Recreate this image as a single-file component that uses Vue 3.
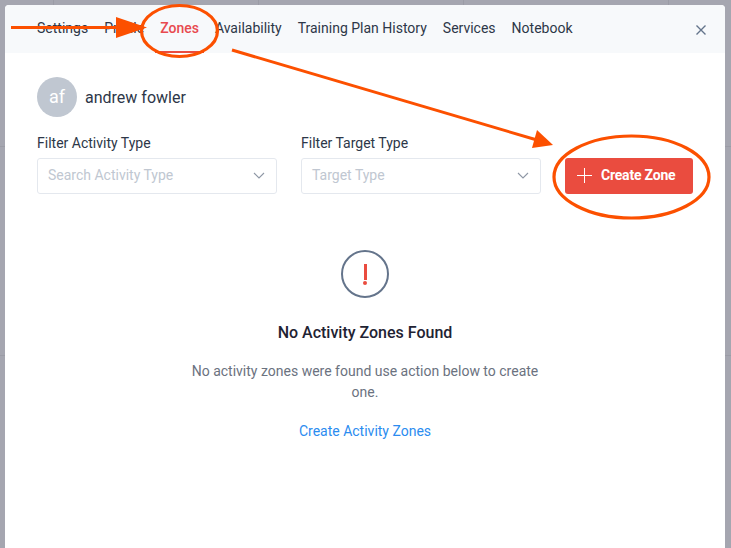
<template>
  <div class="page">
    <div class="backdrop-lines">
      <i v-for="x in [53, 258, 463, 668]" :key="x" class="vline" :style="{ left: x + 'px' }"></i>
      <i v-for="y in [146, 355]" :key="y" class="hline" :style="{ top: y + 'px' }"></i>
    </div>

    <div class="modal">
      <header class="tabs">
        <a v-for="tab in tabs" :key="tab" class="tab" :class="{ active: tab === 'Zones' }">{{ tab }}</a>
        <svg class="close" viewBox="0 0 12 12" width="12" height="12">
          <path d="M1.5 1.5l9 9M10.5 1.5l-9 9" stroke="#64748b" stroke-width="1.4" fill="none" />
        </svg>
      </header>

      <div class="body">
        <div class="user">
          <div class="avatar">af</div>
          <span class="name">andrew fowler</span>
        </div>

        <div class="filters">
          <div class="field">
            <label>Filter Activity Type</label>
            <div class="select">
              <span>Search Activity Type</span>
              <svg viewBox="0 0 12 7" width="12" height="7"><path d="M1 1l5 5 5-5" stroke="#8f98a6" stroke-width="1.1" fill="none" /></svg>
            </div>
          </div>
          <div class="field">
            <label>Filter Target Type</label>
            <div class="select">
              <span>Target Type</span>
              <svg viewBox="0 0 12 7" width="12" height="7"><path d="M1 1l5 5 5-5" stroke="#8f98a6" stroke-width="1.1" fill="none" /></svg>
            </div>
          </div>
          <button class="create">
            <svg viewBox="0 0 15 15" width="15" height="15"><path d="M7.5 0v15M0 7.5h15" stroke="#fff" stroke-width="1" fill="none" /></svg>
            Create Zone
          </button>
        </div>

        <div class="empty">
          <div class="alert"><span class="bar"></span><span class="dot"></span></div>
          <h3>No Activity Zones Found</h3>
          <p>No activity zones were found use action below to create one.</p>
          <a class="link">Create Activity Zones</a>
        </div>
      </div>
    </div>

    <!-- hand drawn annotations on top of the screenshot -->
    <svg class="marks" viewBox="0 0 731 548" width="731" height="548">
      <g fill="none" stroke="#fc5000">
        <path d="M11 27.5L120 27.5" stroke-width="3" />
        <path d="M232 50L537 140" stroke-width="3" />
        <ellipse cx="179.5" cy="31" rx="38" ry="25.5" stroke-width="3.2" />
        <ellipse cx="631.5" cy="177" rx="77.5" ry="41" stroke-width="3.2" />
      </g>
      <path d="M116 17L116 38L147 27.5Z" fill="#fc5000" />
      <path d="M537 130L532 148L553 145Z" fill="#fc5000" />
    </svg>
  </div>
</template>

<script setup>
const tabs = ['Settings', 'Profile', 'Zones', 'Availability', 'Training Plan History', 'Services', 'Notebook'];
</script>

<style>
html, body {
  margin: 0;
  background: #a5a6b0;
}
</style>

<style scoped>
.page {
  position: relative;
  width: 731px;
  height: 548px;
  overflow: hidden;
  background: #a5a6b0;
  padding: 5px 6px 0 5px;
  box-sizing: border-box;
  font-family: Roboto, sans-serif;
  font-size: 14px;
  color: #2d3748;
}

.backdrop-lines i {
  position: absolute;
  background: #9b9ca6;
}

.vline {
  top: 0;
  bottom: 0;
  width: 1px;
}

.hline {
  left: 0;
  right: 0;
  height: 1px;
}

.modal {
  position: relative;
  height: 100%;
  background: #fff;
  border-radius: 4px 4px 0 0;
  overflow: hidden;
}

.tabs {
  display: flex;
  align-items: center;
  height: 48px;
  padding: 0 18px 0 24px;
  background: #f7f9fb;
}

.tab {
  position: relative;
  padding: 0 8px;
  line-height: 44px;
  margin-bottom: 2px;
  white-space: nowrap;
}

.tab.active {
  color: #e84a4f;
  font-weight: 500;
}

.tab.active::after {
  content: '';
  position: absolute;
  left: 3px;
  right: 3px;
  bottom: -3px;
  height: 2px;
  background: #ea4c3f;
}

.close {
  margin-left: auto;
  margin-top: 2px;
}

.body {
  padding: 24px 32px 0;
}

.user {
  display: flex;
  align-items: center;
  gap: 8px;
}

.avatar {
  width: 40px;
  height: 40px;
  border-radius: 50%;
  background: #c0c7d1;
  color: #fff;
  font-size: 18px;
  line-height: 40px;
  text-align: center;
}

.name {
  font-size: 16px;
}

.filters {
  display: flex;
  align-items: flex-end;
  gap: 24px;
  margin-top: 16px;
}

.field {
  width: 240px;
}

label {
  display: block;
  line-height: 20px;
  margin-bottom: 5px;
}

.select {
  display: flex;
  align-items: center;
  justify-content: space-between;
  box-sizing: border-box;
  height: 36px;
  padding: 0 11px 2px 10px;
  border: 1px solid #e4e8ee;
  border-radius: 3px;
  background: #fff;
  color: #c0c7d1;
}

.create {
  display: flex;
  align-items: center;
  gap: 9px;
  width: 128px;
  height: 36px;
  padding: 0 12px 2px;
  border: 0;
  border-radius: 3px;
  background: #ea4c3f;
  color: #fff;
  font-family: inherit;
  font-size: 14px;
  font-weight: 700;
  letter-spacing: -0.2px;
  white-space: nowrap;
}

.empty {
  display: flex;
  flex-direction: column;
  align-items: center;
  margin-top: 56px;
  text-align: center;
}

.alert {
  display: flex;
  flex-direction: column;
  align-items: center;
  justify-content: center;
  gap: 1px;
  width: 44px;
  height: 44px;
  border: 2px solid #64748b;
  border-radius: 50%;
}

.alert .bar {
  width: 3px;
  height: 16px;
  background: #ea4c3f;
}

.alert .dot {
  width: 4px;
  height: 4px;
  border-radius: 50%;
  background: #ea4c3f;
}

h3 {
  margin: 23px 0 0;
  font-size: 16px;
  font-weight: 500;
  line-height: 24px;
  color: #1f2333;
}

p {
  width: 360px;
  margin: 16px 0 0;
  line-height: 21px;
  color: #6b7280;
}

.link {
  margin-top: 18px;
  line-height: 20px;
  color: #2b8cf0;
}

.marks {
  position: absolute;
  top: 0;
  left: 0;
  pointer-events: none;
}
</style>
